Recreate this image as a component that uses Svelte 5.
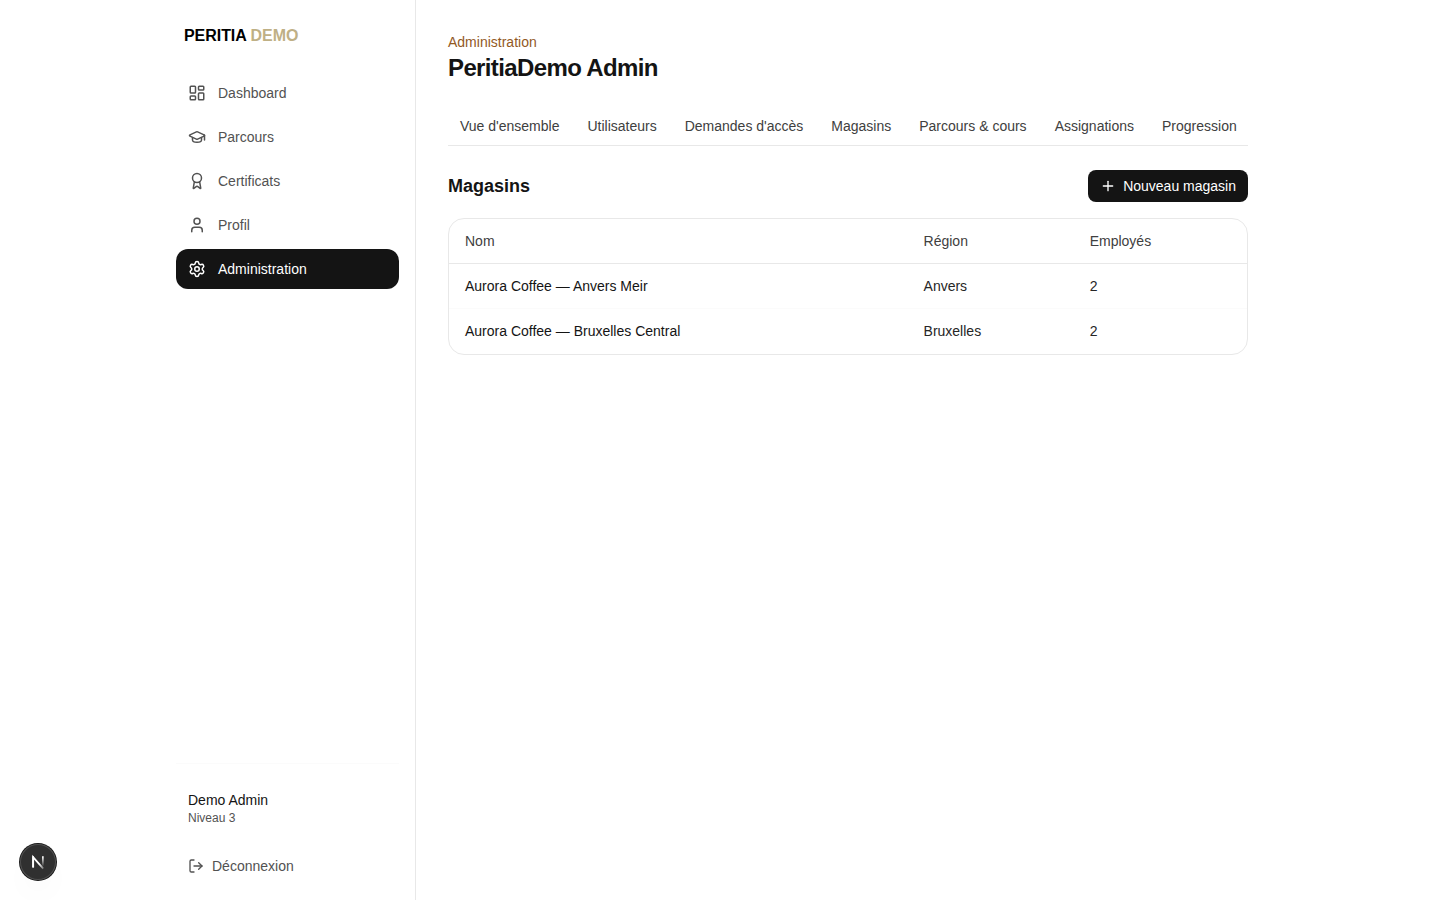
<script lang="ts">
  type Store = { name: string; region: string; employees: number };

  const navItems = [
    { label: 'Dashboard', icon: 'dashboard' },
    { label: 'Parcours', icon: 'cap' },
    { label: 'Certificats', icon: 'award' },
    { label: 'Profil', icon: 'user' },
    { label: 'Administration', icon: 'settings' }
  ];

  const tabs = [
    "Vue d'ensemble",
    'Utilisateurs',
    "Demandes d'accès",
    'Magasins',
    'Parcours & cours',
    'Assignations',
    'Progression'
  ];

  const stores: Store[] = [
    { name: 'Aurora Coffee — Anvers Meir', region: 'Anvers', employees: 2 },
    { name: 'Aurora Coffee — Bruxelles Central', region: 'Bruxelles', employees: 2 }
  ];

  let active = $state('Administration');
</script>

{#snippet icon(name: string)}
  <svg class="icon" class:small={name === 'logout' || name === 'plus'} viewBox="0 0 24 24" aria-hidden="true">
    {#if name === 'dashboard'}
      <rect width="7" height="9" x="3" y="3" rx="1" />
      <rect width="7" height="5" x="14" y="3" rx="1" />
      <rect width="7" height="9" x="14" y="12" rx="1" />
      <rect width="7" height="5" x="3" y="16" rx="1" />
    {:else if name === 'cap'}
      <path d="M21.42 10.922a1 1 0 0 0-.019-1.838L12.83 5.18a2 2 0 0 0-1.66 0L2.6 9.08a1 1 0 0 0 0 1.832l8.57 3.908a2 2 0 0 0 1.66 0z" />
      <path d="M22 10v6" />
      <path d="M6 12.5V16a6 3 0 0 0 12 0v-3.5" />
    {:else if name === 'award'}
      <path d="m15.477 12.89 1.515 8.526a.5.5 0 0 1-.81.47l-3.58-2.687a1 1 0 0 0-1.197 0l-3.586 2.686a.5.5 0 0 1-.81-.469l1.514-8.526" />
      <circle cx="12" cy="8" r="6" />
    {:else if name === 'user'}
      <path d="M19 21v-2a4 4 0 0 0-4-4H9a4 4 0 0 0-4 4v2" />
      <circle cx="12" cy="7" r="4" />
    {:else if name === 'settings'}
      <path d="M9.671 4.136a2.34 2.34 0 0 1 4.659 0 2.34 2.34 0 0 0 3.319 1.915 2.34 2.34 0 0 1 2.33 4.033 2.34 2.34 0 0 0 0 3.831 2.34 2.34 0 0 1-2.33 4.033 2.34 2.34 0 0 0-3.319 1.915 2.34 2.34 0 0 1-4.659 0 2.34 2.34 0 0 0-3.32-1.915 2.34 2.34 0 0 1-2.33-4.033 2.34 2.34 0 0 0 0-3.831A2.34 2.34 0 0 1 6.35 6.051a2.34 2.34 0 0 0 3.319-1.915" />
      <circle cx="12" cy="12" r="3" />
    {:else if name === 'logout'}
      <path d="m16 17 5-5-5-5" />
      <path d="M21 12H9" />
      <path d="M9 21H5a2 2 0 0 1-2-2V5a2 2 0 0 1 2-2h4" />
    {:else if name === 'plus'}
      <path d="M5 12h14" />
      <path d="M12 5v14" />
    {/if}
  </svg>
{/snippet}

<div class="layout">
  <aside class="sidebar">
    <div class="logo">PERITIA <span>DEMO</span></div>

    <nav class="nav">
      {#each navItems as item}
        <button class="nav-item" class:active={active === item.label} onclick={() => (active = item.label)}>
          {@render icon(item.icon)}
          {item.label}
        </button>
      {/each}
    </nav>

    <div class="account">
      <p class="account-name">Demo Admin</p>
      <p class="account-level">Niveau 3</p>
      <button class="logout">
        {@render icon('logout')}
        Déconnexion
      </button>
    </div>
  </aside>

  <main class="main">
    <p class="eyebrow">Administration</p>
    <h1>PeritiaDemo Admin</h1>

    <nav class="tabs">
      {#each tabs as tab}
        <button class="tab">{tab}</button>
      {/each}
    </nav>

    <div class="section-head">
      <h2>Magasins</h2>
      <button class="new-store">
        {@render icon('plus')}
        Nouveau magasin
      </button>
    </div>

    <div class="card">
      <table>
        <thead>
          <tr>
            <th>Nom</th>
            <th>Région</th>
            <th>Employés</th>
          </tr>
        </thead>
        <tbody>
          {#each stores as store}
            <tr>
              <td class="name">{store.name}</td>
              <td>{store.region}</td>
              <td>{store.employees}</td>
            </tr>
          {/each}
        </tbody>
      </table>
    </div>
  </main>
</div>

<button class="dev-badge" aria-label="Next.js">
  <svg viewBox="0 0 40 40" fill="none" aria-hidden="true">
    <defs>
      <linearGradient id="stem" x1="0" y1="14" x2="0" y2="25" gradientUnits="userSpaceOnUse">
        <stop stop-color="#fff" />
        <stop offset="1" stop-color="#fff" stop-opacity="0" />
      </linearGradient>
      <linearGradient id="diagonal" x1="20" y1="19" x2="27" y2="28" gradientUnits="userSpaceOnUse">
        <stop offset="0.3" stop-color="#fff" />
        <stop offset="1" stop-color="#fff" stop-opacity="0.2" />
      </linearGradient>
    </defs>
    <path d="M14.6 26V14.6L25.8 27.4" stroke="url(#diagonal)" stroke-width="2" />
    <path d="M14.6 26V13.6" stroke="#fff" stroke-width="2" />
    <path d="M25.4 13.6v11" stroke="url(#stem)" stroke-width="1.9" />
  </svg>
</button>

<style>
  :global(body) {
    background: #fff;
    color: #141414;
    font-family: 'Liberation Sans', Arial, sans-serif;
    font-size: 14px;
    line-height: 20px;
  }

  h1,
  h2,
  p {
    margin: 0;
  }

  button {
    border: 0;
    padding: 0;
    background: none;
    color: inherit;
    font: inherit;
    cursor: pointer;
  }

  .icon {
    width: 18px;
    height: 18px;
    flex-shrink: 0;
    fill: none;
    stroke: currentColor;
    stroke-width: 2;
    stroke-linecap: round;
    stroke-linejoin: round;
  }

  .icon.small {
    width: 16px;
    height: 16px;
  }

  .layout {
    display: flex;
    box-sizing: border-box;
    width: 1120px;
    height: 100vh;
    margin: 0 auto;
  }

  .sidebar {
    display: flex;
    flex-direction: column;
    box-sizing: border-box;
    width: 256px;
    flex-shrink: 0;
    padding: 24px 16px 14px;
    border-right: 1px solid #e8e8e8;
  }

  .logo {
    padding: 0 8px;
    color: #000;
    font-size: 16px;
    font-weight: 700;
    line-height: 24px;
    letter-spacing: -0.05px;
  }

  .logo span {
    color: #bfb085;
  }

  .nav {
    display: flex;
    flex-direction: column;
    gap: 4px;
    margin-top: 25px;
  }

  .nav-item {
    display: flex;
    align-items: center;
    gap: 12px;
    height: 40px;
    padding: 0 12px;
    border-radius: 12px;
    color: #525252;
  }

  .nav-item.active {
    background: #141414;
    color: #fff;
  }

  .account {
    margin-top: auto;
    padding: 26px 12px 0;
    border-top: 1px solid #fbfbfb;
  }

  .account-level {
    color: #525252;
    font-size: 12px;
    line-height: 16px;
  }

  .logout {
    display: flex;
    align-items: center;
    gap: 8px;
    height: 40px;
    margin-top: 20px;
    color: #525252;
  }

  .main {
    flex: 1;
    min-width: 0;
    padding: 32px;
  }

  .eyebrow {
    color: #92591f;
  }

  h1 {
    font-size: 24px;
    font-weight: 700;
    line-height: 32px;
    letter-spacing: -0.026em;
  }

  .tabs {
    display: flex;
    gap: 4px;
    margin-top: 24px;
    border-bottom: 1px solid #e8e8e8;
  }

  .tab {
    padding: 8px 12px 9px;
    color: #404040;
    white-space: nowrap;
  }

  .section-head {
    display: flex;
    align-items: center;
    justify-content: space-between;
    margin: 24px 0 16px;
  }

  h2 {
    font-size: 18px;
    font-weight: 700;
    line-height: 28px;
  }

  .new-store {
    display: flex;
    align-items: center;
    gap: 7px;
    height: 32px;
    padding: 0 12px;
    border-radius: 8px;
    background: #141414;
    color: #fff;
  }

  .card {
    overflow: hidden;
    border: 1px solid #e8e8e8;
    border-radius: 16px;
  }

  table {
    width: 100%;
    border-spacing: 0;
  }

  th,
  td {
    padding: 12px 16px;
    text-align: left;
    font-weight: 400;
  }

  th {
    border-bottom: 1px solid #e8e8e8;
    color: #404040;
  }

  td {
    border-bottom: 1px solid #fbfbfb;
    color: #262626;
  }

  tbody tr:last-child td {
    border-bottom-color: transparent;
  }

  .name {
    color: #141414;
  }

  .dev-badge {
    position: fixed;
    left: 20px;
    bottom: 20px;
    width: 36px;
    height: 36px;
    border-radius: 50%;
    background: #303030;
    box-shadow:
      0 0 0 1px #171717,
      inset 0 0 0 1px #505050,
      0 16px 32px -8px rgba(0, 0, 0, 0.06);
  }

  .dev-badge svg {
    display: block;
    width: 36px;
    height: 36px;
  }
</style>
